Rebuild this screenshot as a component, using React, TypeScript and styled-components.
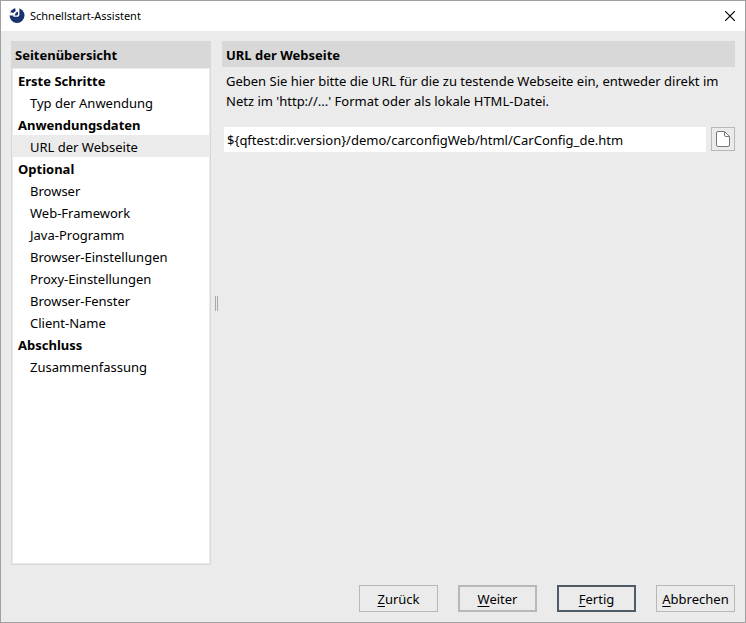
import React, { useState } from 'react';
import styled, { createGlobalStyle, css } from 'styled-components';

const GlobalStyle = createGlobalStyle`
  * { box-sizing: border-box; }
  body {
    margin: 0;
    color: #000;
    font: 13px/20px "Noto Sans", "Open Sans", sans-serif;
  }
  button, input { font: inherit; color: inherit; }
`;

const Window = styled.div`
  display: flex;
  flex-direction: column;
  min-height: 100vh;
  border: 1px solid #a0a0a0;
  background: #ebebeb;
`;

const TitleBar = styled.header`
  display: flex;
  align-items: center;
  gap: 5px;
  height: 30px;
  padding: 0 8px;
  background: #fff;
`;

const Title = styled.h1`
  flex: 1;
  margin: 0;
  font-size: 11px;
  font-weight: 400;
`;

const CloseButton = styled.button`
  display: flex;
  padding: 2px;
  border: 0;
  background: none;
`;

const Body = styled.div`
  flex: 1;
  display: grid;
  grid-template-columns: 200px 11px minmax(0, 1fr);
  padding: 10px 10px 0;
`;

const Sidebar = styled.nav`
  display: flex;
  flex-direction: column;
`;

const PanelTitle = styled.h2`
  margin: 0;
  padding: 4px;
  height: 26px;
  background: #d8d8d8;
  font-size: 13px;
  font-weight: 700;
  line-height: 20px;
`;

const PageList = styled.div`
  flex: 1;
  padding: 1px;
  border: 1px solid #d8d8d8;
  background: #fff content-box;
`;

const Group = styled.h3`
  margin: 0;
  padding: 2px 5px 0;
  font-size: 13px;
  line-height: 20px;
`;

const Pages = styled.ul`
  margin: 0;
  padding: 0;
  list-style: none;
`;

const PageButton = styled.button<{ $current: boolean }>`
  display: block;
  width: 100%;
  padding: 2px 0 0 17px;
  border: 0;
  background: ${(p) => (p.$current ? '#ebebeb' : 'transparent')};
  text-align: left;
  line-height: 20px;
`;

const Splitter = styled.div`
  align-self: center;
  justify-self: center;
  width: 3px;
  height: 15px;
  border: solid #a9a9a9;
  border-width: 0 1px;
`;

const Description = styled.label`
  display: block;
  padding: 4px;
`;

const FieldRow = styled.div`
  display: flex;
  align-items: flex-start;
  gap: 5px;
  padding: 12px 0 0 2px;
`;

const UrlInput = styled.input`
  flex: 1;
  min-width: 0;
  height: 25px;
  padding: 0 3px;
  border: 0;
  outline: 0;
  background: #fff;
`;

const FileButton = styled.button`
  display: grid;
  place-items: center;
  width: 24px;
  height: 24px;
  padding: 0;
  border: 1px solid #b8b8b8;
  background: #ebebeb;
`;

const Footer = styled.footer`
  display: flex;
  justify-content: flex-end;
  gap: 20px;
  padding: 20px 10px 10px;
`;

type Emphasis = 'plain' | 'next' | 'primary';

const borders = {
  plain: css`border: 1px solid #b8b8b8;`,
  next: css`border: 2px solid #b8b8b8;`,
  primary: css`border: 2px solid #4f5b66;`,
};

const ActionButton = styled.button<{ $emphasis: Emphasis }>`
  width: 79px;
  height: 27px;
  padding: 0;
  background: #ebebeb;
  ${(p) => borders[p.$emphasis]}
`;

const Mnemonic = styled.span`
  text-decoration: underline;
  text-underline-offset: 2px;
`;

const groups = [
  { name: 'Erste Schritte', pages: ['Typ der Anwendung'] },
  { name: 'Anwendungsdaten', pages: ['URL der Webseite'] },
  {
    name: 'Optional',
    pages: ['Browser', 'Web-Framework', 'Java-Programm', 'Browser-Einstellungen', 'Proxy-Einstellungen', 'Browser-Fenster', 'Client-Name'],
  },
  { name: 'Abschluss', pages: ['Zusammenfassung'] },
];

const actions: { label: string; emphasis: Emphasis }[] = [
  { label: 'Zurück', emphasis: 'plain' },
  { label: 'Weiter', emphasis: 'next' },
  { label: 'Fertig', emphasis: 'primary' },
  { label: 'Abbrechen', emphasis: 'plain' },
];

const Logo = () => (
  <svg width="16" height="16" viewBox="0 0 16 16" aria-hidden="true">
    <circle cx="8" cy="7.5" r="7.5" fill="#18326f" />
    <path d="M6.2 0H10.400V7.200L9.200 8.800H4.400V7.400H0V4.600L4 4.400 6.600 3z" fill="#fff" />
    <path d="M2 3.400 5 .8 6.400 3 4 5z" fill="#18326f" />
    <path d="M6.800 4.800 9 3.600V6.400L8 7.400H5.600z" fill="#18326f" />
  </svg>
);

const CloseIcon = () => (
  <svg width="10" height="10" viewBox="0 0 10 10" aria-hidden="true">
    <path d="M0 0 10 10M10 0 0 10" stroke="#000" strokeWidth="1.2" />
  </svg>
);

const FileIcon = () => (
  <svg width="14" height="16" viewBox="0 0 14 16" fill="none" stroke="#777" aria-hidden="true">
    <path d="M2 .5h6.5l5 5V14a1.5 1.5 0 0 1-1.5 1.5H2A1.5 1.5 0 0 1 .5 14V2A1.5 1.5 0 0 1 2 .5z" fill="#fff" />
    <path d="M8.5 .5V4A1.5 1.5 0 0 0 10 5.5h3.5" />
  </svg>
);

export default function App() {
  const [page, setPage] = useState('URL der Webseite');
  const [url, setUrl] = useState('${qftest:dir.version}/demo/carconfigWeb/html/CarConfig_de.htm');

  return (
    <>
      <GlobalStyle />
      <Window>
        <TitleBar>
          <Logo />
          <Title>Schnellstart-Assistent</Title>
          <CloseButton aria-label="Schließen"><CloseIcon /></CloseButton>
        </TitleBar>
        <Body>
          <Sidebar>
            <PanelTitle>Seitenübersicht</PanelTitle>
            <PageList>
              {groups.map((group) => (
                <section key={group.name}>
                  <Group>{group.name}</Group>
                  <Pages>
                    {group.pages.map((name) => (
                      <li key={name}>
                        <PageButton $current={name === page} onClick={() => setPage(name)}>{name}</PageButton>
                      </li>
                    ))}
                  </Pages>
                </section>
              ))}
            </PageList>
          </Sidebar>
          <Splitter role="separator" aria-orientation="vertical" />
          <main>
            <PanelTitle>URL der Webseite</PanelTitle>
            <Description htmlFor="url">
              Geben Sie hier bitte die URL für die zu testende Webseite ein, entweder direkt im Netz im 'http://...' Format oder als lokale HTML-Datei.
            </Description>
            <FieldRow>
              <UrlInput id="url" value={url} spellCheck={false} onChange={(e) => setUrl(e.target.value)} />
              <FileButton aria-label="Datei auswählen"><FileIcon /></FileButton>
            </FieldRow>
          </main>
        </Body>
        <Footer>
          {actions.map(({ label, emphasis }) => (
            <ActionButton key={label} $emphasis={emphasis}>
              <Mnemonic>{label[0]}</Mnemonic>{label.slice(1)}
            </ActionButton>
          ))}
        </Footer>
      </Window>
    </>
  );
}
